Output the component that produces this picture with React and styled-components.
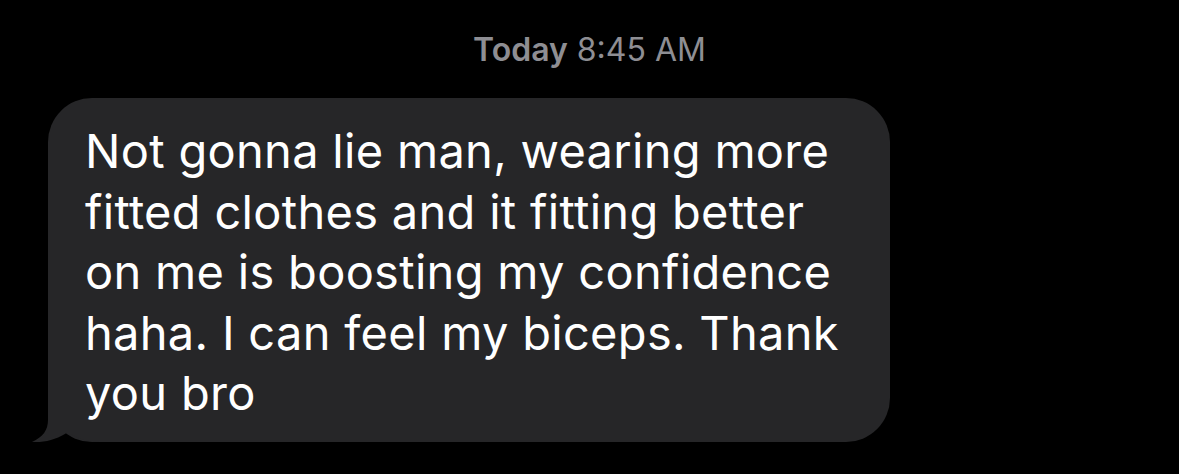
import React from "react";
import styled, { createGlobalStyle } from "styled-components";

const GlobalStyle = createGlobalStyle`
  html, body {
    margin: 0;
    padding: 0;
    background: #000;
  }
  body {
    font-family: Inter, "Noto Sans", sans-serif;
  }
`;

const Screen = styled.div`
  width: 1179px;
  height: 474px;
  background: #000;
  padding-top: 31px;
  box-sizing: border-box;
  display: flex;
  flex-direction: column;
  overflow: hidden;
`;

const Stamp = styled.div`
  text-align: center;
  color: #8e8e93;
  font-size: 32px;
  line-height: 38px;

  b {
    font-weight: 600;
  }
`;

const Bubble = styled.div`
  position: relative;
  isolation: isolate;
  align-self: flex-start;
  margin: 29px 0 0 48px;
  width: 842px;
  height: 344px;
  box-sizing: border-box;
  padding: 23px 20px 0 37px;
  background: #262628;
  border-radius: 44px;
  color: #fff;
  font-size: 47px;
  line-height: 60.5px;
  letter-spacing: 0.3px;
  white-space: nowrap;
`;

const Tail = styled.svg`
  position: absolute;
  z-index: -1;
  left: -20px;
  bottom: 0;
  width: 72px;
  height: 50px;
  display: block;
`;

const lines = [
  "Not gonna lie man, wearing more",
  "fitted clothes and it fitting better",
  "on me is boosting my confidence",
  "haha. I can feel my biceps. Thank",
  "you bro",
];

const App = () => {
  return (
    <>
      <GlobalStyle />
      <Screen>
        <Stamp>
          <b>Today</b> 8:45 AM
        </Stamp>
        <Bubble>
          {lines.map((line, i) => (
            <React.Fragment key={i}>
              {line}
              {i < lines.length - 1 && <br />}
            </React.Fragment>
          ))}
          <Tail viewBox="0 0 72 50">
            <path
              d="M20,0 L20,28 C20,38 15,45 4,50 C16,51 30,47 40,40 C48,46 58,50 72,50 L72,0 Z"
              fill="#262628"
            />
          </Tail>
        </Bubble>
      </Screen>
    </>
  );
};

export default App;
